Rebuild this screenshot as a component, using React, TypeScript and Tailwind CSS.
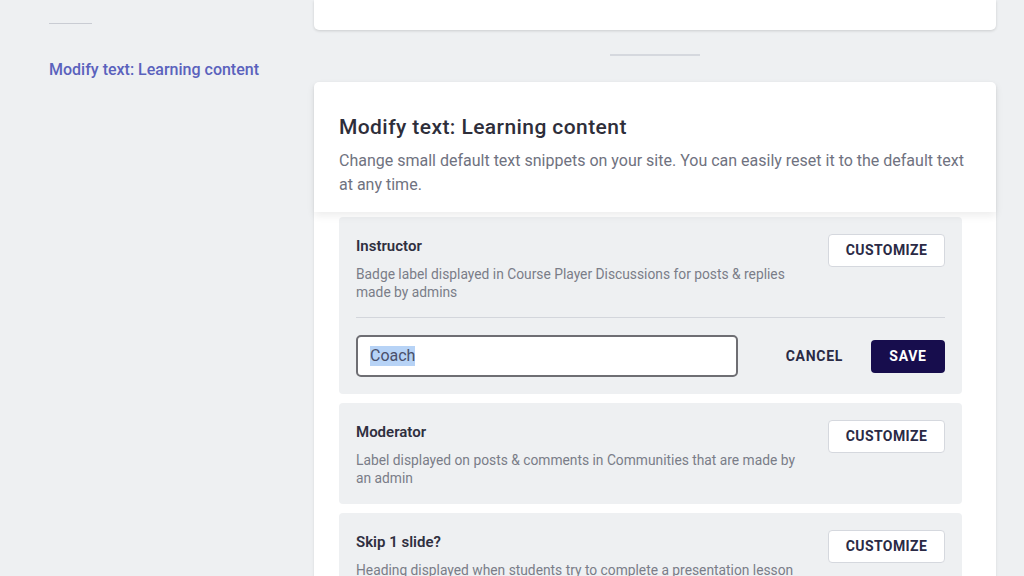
const items = [
  {
    title: "Instructor",
    lines: ["Badge label displayed in Course Player Discussions for posts & replies", "made by admins"],
    editing: true,
  },
  {
    title: "Moderator",
    lines: ["Label displayed on posts & comments in Communities that are made by", "an admin"],
    editing: false,
  },
  {
    title: "Skip 1 slide?",
    lines: ["Heading displayed when students try to complete a presentation lesson", "without viewing every slide"],
    editing: false,
  },
];

function CustomizeButton() {
  return (
    <button className="h-[33px] w-[117px] shrink-0 rounded-[4px] border border-[#d5d8de] bg-white text-[14px] font-bold tracking-[0.03em] text-[#2a2a45]">
      CUSTOMIZE
    </button>
  );
}

function SnippetRow({ title, lines, editing }: { title: string; lines: string[]; editing: boolean }) {
  return (
    <div className="shrink-0 rounded-[4px] bg-[#eef0f2] px-[17px] pt-[17px] pb-[17px]">
      <div className="flex items-start justify-between">
        <div className="pt-[1px]">
          <p className="text-[15px] font-semibold leading-[22px] text-[#2f2f3f]">{title}</p>
          <p className="mt-[8px] text-[13.8px] leading-[18px] text-[#7a7d88]">
            {lines[0]}
            <br />
            {lines[1]}
          </p>
        </div>
        <CustomizeButton />
      </div>
      {editing && (
        <>
          <div className="mt-[16px] h-px bg-[#d3d6dc]" />
          <div className="mt-[17px] flex items-center">
            <div className="flex h-[42px] w-[382px] items-center rounded-[5px] border-2 border-[#6e6e73] bg-white px-[12px]">
              <span className="bg-[#b7d3f6] text-[16px] leading-[20px] text-[#4a4f6a]">Coach</span>
            </div>
            <button className="ml-auto text-[14px] font-bold tracking-[0.05em] text-[#2a2a45]">CANCEL</button>
            <button className="ml-[28px] h-[33px] w-[74px] rounded-[4px] bg-[#170d4d] text-[14px] font-bold tracking-[0.05em] text-white">
              SAVE
            </button>
          </div>
        </>
      )}
    </div>
  );
}

export default function App() {
  return (
    <div className="flex h-[576px] w-[1024px] overflow-hidden bg-[#eef0f2] font-['Roboto',sans-serif]">
      <aside className="w-[314px] shrink-0 pl-[49px]">
        <div className="mt-[23px] h-px w-[43px] bg-[#c9ccd3]" />
        <p className="mt-[34px] text-[16px] font-medium text-[#5a62bd]">Modify text: Learning content</p>
      </aside>

      <main className="flex w-[682px] shrink-0 flex-col">
        <div className="h-[30px] shrink-0 rounded-b-[5px] bg-white shadow-[0_1px_3px_rgba(0,0,0,0.15)]" />
        <div className="mx-auto mt-[24px] h-[2px] w-[90px] shrink-0 bg-[#d5d8de]" />

        <section className="mt-[26px] shrink-0 rounded-t-[5px] bg-white shadow-[0_1px_3px_rgba(0,0,0,0.1)]">
          <header className="relative z-10 px-[25px] pt-[31px] pb-[15px] shadow-[0_4px_8px_rgba(0,0,0,0.07)]">
            <h1 className="text-[21px] font-medium leading-[28px] tracking-[0.02em] text-[#2e2e3a]">
              Modify text: Learning content
            </h1>
            <p className="mt-[8px] max-w-[625px] text-[16px] leading-[24px] text-[#6f7280]">
              Change small default text snippets on your site. You can easily reset it to the default text at any time.
            </p>
          </header>

          <div className="flex flex-col gap-[9px] pt-[5px] pr-[34px] pl-[25px]">
            {items.map((item) => (
              <SnippetRow key={item.title} {...item} />
            ))}
          </div>
        </section>
      </main>
    </div>
  );
}
